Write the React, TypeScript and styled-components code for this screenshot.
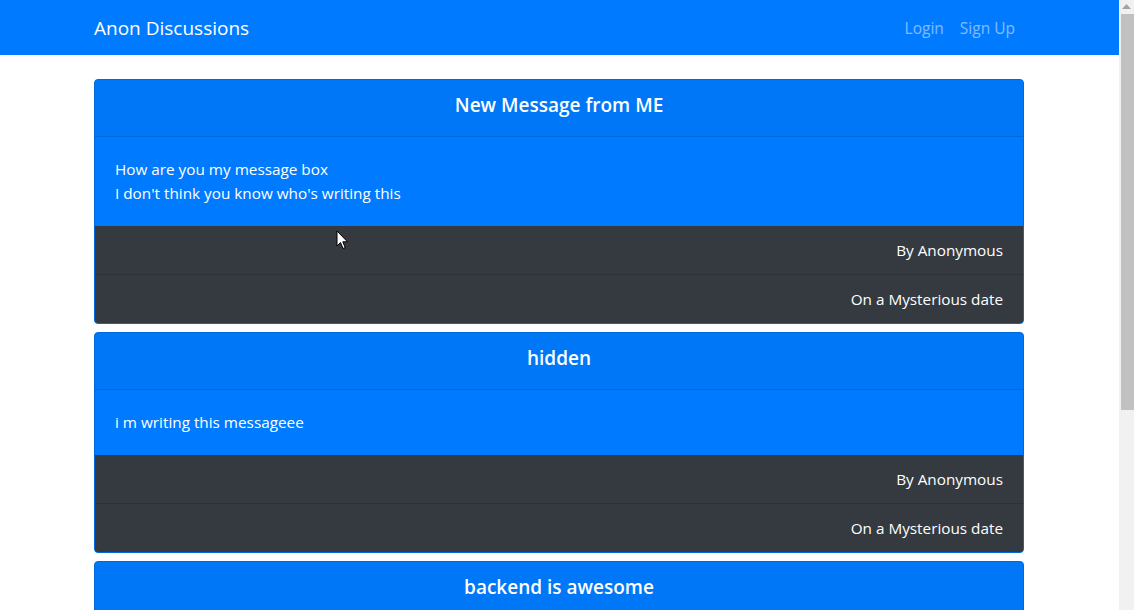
import React from "react";
import styled, { createGlobalStyle } from "styled-components";

const GlobalStyle = createGlobalStyle`
  html, body { margin: 0; padding: 0; overflow: hidden; }
  body {
    font-family: "Open Sans", "Noto Sans", "Liberation Sans", sans-serif;
    font-size: 16px;
    color: #212529;
    background: #fff;
  }
  * { box-sizing: border-box; }
`;

const Frame = styled.div`
  display: flex;
  width: 1134px;
  height: 610px;
  overflow: hidden;
`;

const Page = styled.div`
  position: relative;
  flex: 1;
  overflow: hidden;
  background: #fff;
`;

const Navbar = styled.nav`
  height: 55px;
  background: #007bff;
`;

const Container = styled.div`
  width: 930px;
  margin-left: 94px;
`;

const NavInner = styled(Container)`
  height: 100%;
  display: flex;
  align-items: center;
  justify-content: space-between;
`;

const Brand = styled.span`
  font-size: 19px;
  color: #fff;
  line-height: 30px;
  padding-top: 1px;
`;

const NavLinks = styled.div`
  display: flex;
  padding-right: 1px;
`;

const NavLink = styled.span`
  padding: 0 8px;
  color: rgba(255, 255, 255, 0.5);
  font-size: 15.5px;
  line-height: 24px;
`;

const Main = styled(Container)`
  padding-top: 24px;
  display: flex;
  flex-direction: column;
  gap: 8px;
`;

const Card = styled.div`
  background: #007bff;
  border: 1px solid #0069d9;
  border-radius: 4px;
  overflow: hidden;
  color: #fff;
`;

const CardHeader = styled.div`
  background: rgba(0, 0, 0, 0.03);
  border-bottom: 1px solid rgba(0, 0, 0, 0.125);
  padding: 12px 20px;
  text-align: center;
`;

const Title = styled.h5`
  margin: 1px 0 7px;
  font-size: 19px;
  font-weight: 600;
  line-height: 24px;
`;

const CardBody = styled.div`
  padding: 20px 20px 21px;
  font-size: 15.3px;
  line-height: 24px;
`;

const Line = styled.div``;

const MetaItem = styled.div`
  background: #343a40;
  padding: 12px 20px;
  text-align: right;
  font-size: 15.3px;
  line-height: 24px;
  border-top: 1px solid rgba(0, 0, 0, 0.125);
  &:first-of-type { border-top: none; }
`;

const Meta = styled.div``;

const ScrollBar = styled.div`
  width: 15px;
  background: #f1f1f1;
  display: flex;
  flex-direction: column;
  align-items: center;
`;

const ArrowBtn = styled.div`
  height: 14px;
  display: flex;
  align-items: center;
  justify-content: center;
`;

const Thumb = styled.div`
  width: 13px;
  height: 396px;
  margin-left: 2px;
  background: #c1c1c1;
`;

const Cursor = styled.svg`
  position: absolute;
  left: 336px;
  top: 230px;
`;

type Msg = { title: string; lines: string[] };

const messages: Msg[] = [
  {
    title: "New Message from ME",
    lines: ["How are you my message box", "I don't think you know who's writing this"],
  },
  { title: "hidden", lines: ["i m writing this messageee"] },
  { title: "backend is awesome", lines: ["a"] },
];

export default function App() {
  return (
    <>
      <GlobalStyle />
      <Frame>
        <Page>
          <Navbar>
            <NavInner>
              <Brand>Anon Discussions</Brand>
              <NavLinks>
                <NavLink>Login</NavLink>
                <NavLink>Sign Up</NavLink>
              </NavLinks>
            </NavInner>
          </Navbar>
          <Main>
            {messages.map((m) => (
              <Card key={m.title}>
                <CardHeader>
                  <Title>{m.title}</Title>
                </CardHeader>
                <CardBody>
                  {m.lines.map((l) => (
                    <Line key={l}>{l}</Line>
                  ))}
                </CardBody>
                <Meta>
                  <MetaItem>By Anonymous</MetaItem>
                  <MetaItem>On a Mysterious date</MetaItem>
                </Meta>
              </Card>
            ))}
          </Main>
          <Cursor width="13" height="20" viewBox="0 0 13 20">
            <path
              d="M1 1 L1 16 L4.5 12.5 L7 18.5 L9.2 17.6 L6.8 11.8 L11.5 11.8 Z"
              fill="#fff"
              stroke="#000"
              strokeWidth="1"
              strokeLinejoin="miter"
            />
          </Cursor>
        </Page>
        <ScrollBar>
          <ArrowBtn>
            <svg width="9" height="6" viewBox="0 0 9 6">
              <path d="M4.5 0 L9 5 L0 5 Z" fill="#a3a3a3" />
            </svg>
          </ArrowBtn>
          <Thumb />
        </ScrollBar>
      </Frame>
    </>
  );
}
